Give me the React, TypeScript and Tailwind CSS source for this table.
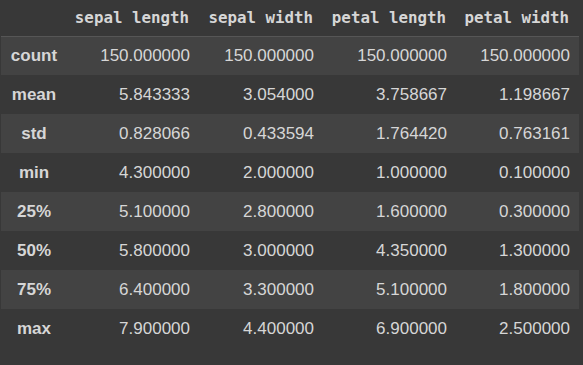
import React from "react";

const cols = ["sepal length", "sepal width", "petal length", "petal width"];

const rows: [string, string[]][] = [
  ["count", ["150.000000", "150.000000", "150.000000", "150.000000"]],
  ["mean", ["5.843333", "3.054000", "3.758667", "1.198667"]],
  ["std", ["0.828066", "0.433594", "1.764420", "0.763161"]],
  ["min", ["4.300000", "2.000000", "1.000000", "0.100000"]],
  ["25%", ["5.100000", "2.800000", "1.600000", "0.300000"]],
  ["50%", ["5.800000", "3.000000", "4.350000", "1.300000"]],
  ["75%", ["6.400000", "3.300000", "5.100000", "1.800000"]],
  ["max", ["7.900000", "4.400000", "6.900000", "2.500000"]],
];

export default function App() {
  return (
    <main className="min-h-screen bg-[#383838] pl-px pt-0 text-[#d6d6d6]">
      <table
        className="table-fixed border-collapse w-[578px]"
        style={{ fontFamily: '"Liberation Sans", Arial, sans-serif' }}
      >
        <colgroup>
          <col className="w-[65px]" />
          <col className="w-[133px]" />
          <col className="w-[124px]" />
          <col className="w-[133px]" />
          <col className="w-[123px]" />
        </colgroup>
        <thead>
          <tr className="h-[36px] border-b border-[#565656]">
            <th></th>
            {cols.map((c) => (
              <th
                key={c}
                className="text-right pr-[10px] font-bold text-[15.8px] font-['DejaVu_Sans_Mono',monospace] whitespace-nowrap"
              >
                {c}
              </th>
            ))}
          </tr>
        </thead>
        <tbody>
          {rows.map(([label, vals], i) => (
            <tr key={label} className={i % 2 === 0 ? "h-[39px] bg-[#434343]" : "h-[39px]"}>
              <th className="text-center font-bold text-[17px] pl-[1px]">{label}</th>
              {vals.map((v, j) => (
                <td key={j} className="text-right pr-[9px] text-[17px] whitespace-nowrap">
                  {v}
                </td>
              ))}
            </tr>
          ))}
        </tbody>
      </table>
    </main>
  );
}
